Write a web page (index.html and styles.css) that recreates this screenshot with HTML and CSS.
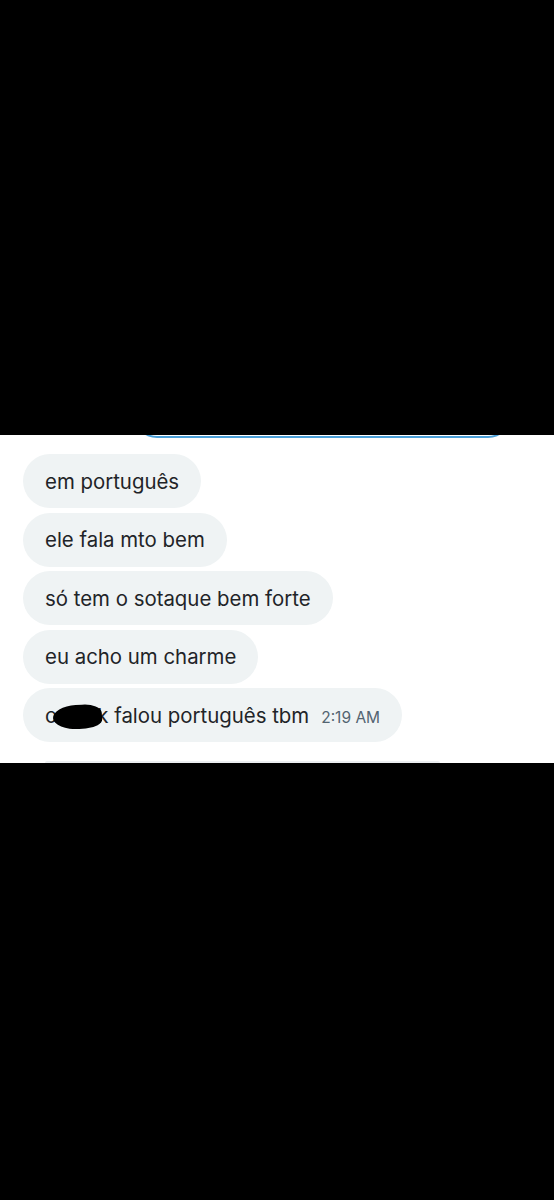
FILE: index.html
```html
<!DOCTYPE html>
<html lang="pt">
<head>
<meta charset="utf-8">
<link rel="stylesheet" href="styles.css">
</head>
<body>
<div class="top-black"></div>
<section class="panel">
  <div class="composer"></div>
  <div class="messages">
    <div class="bubble">em português</div>
    <div class="bubble">ele fala mto bem</div>
    <div class="bubble">só tem o sotaque bem forte</div>
    <div class="bubble">eu acho um charme</div>
    <div class="bubble">o<span class="redact"></span>k falou português tbm<span class="time">2:19 AM</span></div>
  </div>
  <div class="next-bubble"></div>
</section>
<div class="bottom-black"></div>
</body>
</html>
```
FILE: styles.css
```css
html, body {
  margin: 0;
  padding: 0;
  background: #000;
}
body {
  width: 554px;
  height: 1200px;
  font-family: Inter, "Noto Sans", sans-serif;
}
.top-black {
  height: 435px;
  background: #000;
}
.panel {
  background: #fff;
  height: 328px;
  overflow: hidden;
  display: flex;
  flex-direction: column;
}
.composer {
  margin: -28px 0 0 133px;
  width: 379px;
  height: 31px;
  border: 2px solid #4a9fd8;
  border-top: 0;
  border-radius: 0 0 24px 24px;
  box-sizing: border-box;
}
.messages {
  margin-top: 16px;
  display: flex;
  flex-direction: column;
  align-items: flex-start;
  gap: 4.5px;
  padding-left: 23px;
}
.bubble {
  height: 54px;
  box-sizing: border-box;
  padding: 0 22px;
  border-radius: 27px;
  background: #eff3f4;
  color: #1f2428;
  font-size: 20.4px;
  display: flex;
  align-items: center;
  white-space: nowrap;
}
.redact {
  display: inline-block;
  width: 49px;
  height: 24px;
  margin: 3px -5px 0 -4px;
  background: #000;
  border-radius: 55% 45% 40% 60%;
  transform: rotate(-4deg);
}
.time {
  font-size: 15.5px;
  color: #536471;
  margin-left: 12px;
  margin-top: 4px;
}
.next-bubble {
  margin: auto 0 0 45px;
  width: 395px;
  height: 2px;
  background: #eceff1;
  border-radius: 2px 2px 0 0;
}
.bottom-black {
  height: 437px;
  background: #000;
}
```
